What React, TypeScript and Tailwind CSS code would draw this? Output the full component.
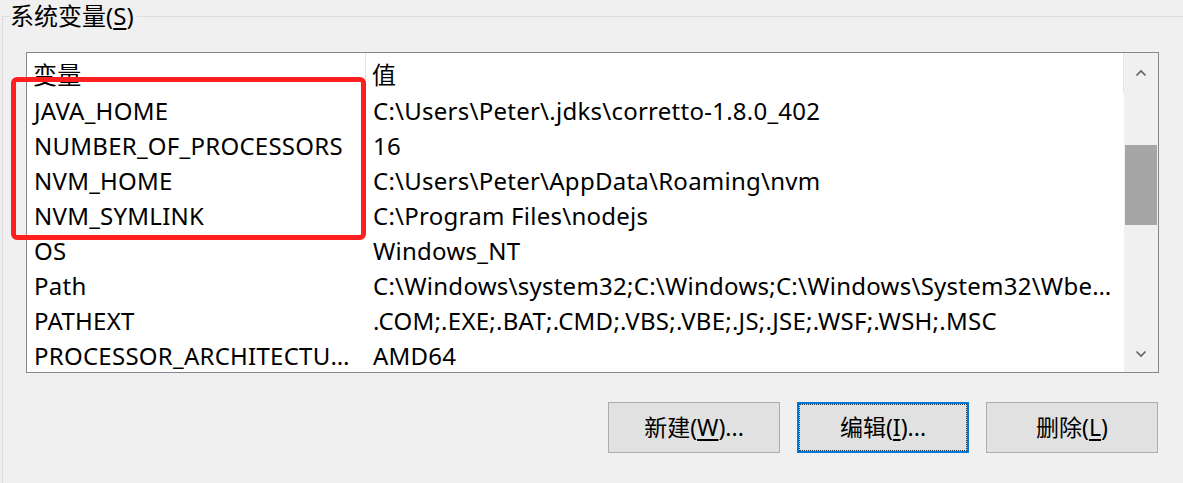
import React from "react";

const FONT = '"Noto Sans", "Noto Sans CJK SC", sans-serif';

const rows: [string, string][] = [
  ["JAVA_HOME", "C:\\Users\\Peter\\.jdks\\corretto-1.8.0_402"],
  ["NUMBER_OF_PROCESSORS", "16"],
  ["NVM_HOME", "C:\\Users\\Peter\\AppData\\Roaming\\nvm"],
  ["NVM_SYMLINK", "C:\\Program Files\\nodejs"],
  ["OS", "Windows_NT"],
  ["Path", "C:\\Windows\\system32;C:\\Windows;C:\\Windows\\System32\\Wbem;C:\\Windows\\System32\\WindowsPowerShell"],
  ["PATHEXT", ".COM;.EXE;.BAT;.CMD;.VBS;.VBE;.JS;.JSE;.WSF;.WSH;.MSC"],
  ["PROCESSOR_ARCHITECTURE", "AMD64"],
];

function Chevron({ up }: { up?: boolean }) {
  return (
    <svg width="12" height="8" viewBox="0 0 12 8">
      <path
        d={up ? "M1.5 6.5 L6 2 L10.5 6.5" : "M1.5 1.5 L6 6 L10.5 1.5"}
        fill="none"
        stroke="#606060"
        strokeWidth="1.6"
      />
    </svg>
  );
}

function Btn({
  label,
  mn,
  tail,
  focused,
}: {
  label: string;
  mn: string;
  tail: string;
  focused?: boolean;
}) {
  return (
    <button
      className={
        "flex h-[51px] w-[172px] items-center justify-center bg-[#e1e1e1] text-[23px] text-black " +
        (focused ? "border-2 border-[#0078d7]" : "border border-[#adadad]")
      }
    >
      <span
        className={
          "flex h-full w-full items-center justify-center whitespace-pre " +
          (focused ? "border border-dotted border-[#333]" : "")
        }
      >
        {label}(<span className="underline underline-offset-[3px]">{mn}</span>){tail}
      </span>
    </button>
  );
}

export default function App() {
  return (
    <div
      className="relative h-[483px] w-[1183px] overflow-hidden bg-[#f0f0f0] text-black"
      style={{ fontFamily: FONT }}
    >
      <fieldset className="ml-[2px] h-[520px] border-l border-t border-[#dcdcdc] pl-[23px]">
        <legend className="-ml-[16px] pr-[3px] text-[24px] leading-[32px]">
          系统变量(<span className="underline underline-offset-[3px]">S</span>)
        </legend>

        <div className="mt-[20px] flex h-[321px] w-[1133px] border border-[#828790] bg-white">
          <div className="flex min-w-0 flex-1 flex-col text-[24px] tracking-[0.25px]">
            <div className="flex h-[40px] shrink-0">
              <div className="w-[339px] border-r border-[#e5e5e5] pl-[6px] pt-[4px] leading-[36px]">
                变量
              </div>
              <div className="flex-1 border-r border-[#e5e5e5] pl-[6px] pt-[4px] leading-[36px]">
                值
              </div>
            </div>
            {rows.map(([k, v]) => (
              <div key={k} className="flex h-[35px] shrink-0 leading-[35px]">
                <div className="w-[339px] truncate pl-[7px] pr-[12px]">{k}</div>
                <div className="min-w-0 flex-1 truncate pl-[7px] pr-[4px]">{v}</div>
              </div>
            ))}
          </div>

          <div className="flex w-[34px] shrink-0 flex-col bg-[#f0f0f0]">
            <div className="flex h-[40px] items-center justify-center">
              <Chevron up />
            </div>
            <div className="mx-[1px] mt-[52px] h-[80px] bg-[#a6a6a6]" />
            <div className="flex-1" />
            <div className="flex h-[36px] items-center justify-center">
              <Chevron />
            </div>
          </div>
        </div>

        <div className="mt-[29px] flex w-[1133px] justify-end gap-[17px] pr-[1px]">
          <Btn label="新建" mn="W" tail="..." />
          <Btn label="编辑" mn="I" tail="..." focused />
          <Btn label="删除" mn="L" tail="" />
        </div>
      </fieldset>

      <div className="pointer-events-none absolute left-[11px] top-[77px] h-[163px] w-[355px] rounded-[6px] border-[5px] border-[#fe1f1f]" />
    </div>
  );
}
